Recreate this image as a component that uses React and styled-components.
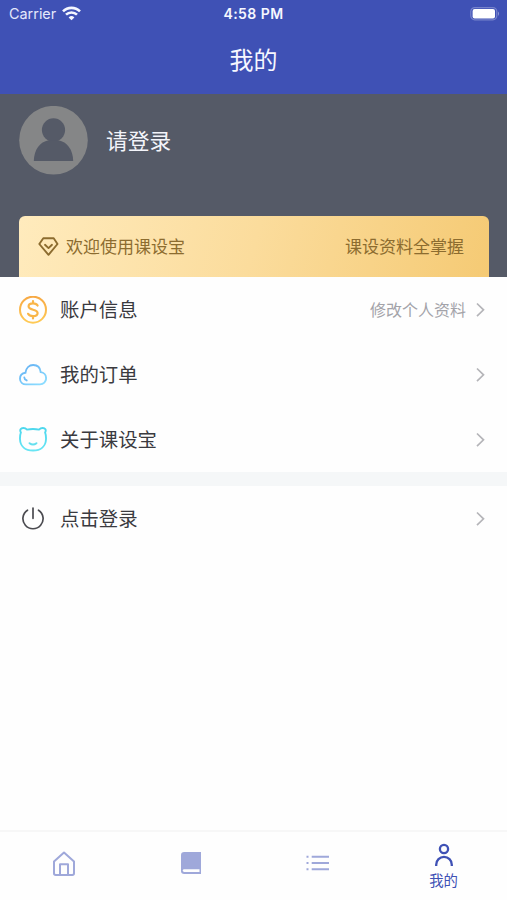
import React from "react";
import styled, { createGlobalStyle } from "styled-components";

const GlobalStyle = createGlobalStyle`
  * { box-sizing: border-box; }
  body {
    margin: 0;
    background: #fff;
    font-family: "Noto Sans CJK SC", sans-serif;
  }
  svg { display: block; flex: none; }
`;

const Screen = styled.div`
  display: flex;
  flex-direction: column;
  width: 507px;
  height: 900px;
  overflow: hidden;
  background: #fefefe;
`;

const Header = styled.header`
  height: 94px;
  flex: none;
  background: #3f51b5;
  color: #f6f7ff;
`;

const StatusBar = styled.div`
  display: grid;
  grid-template-columns: 1fr auto 1fr;
  align-items: center;
  height: 27px;
  padding: 0 7px 0 9px;
  font-family: Inter, sans-serif;
  font-size: 14px;
  line-height: 27px;
`;

const Carrier = styled.div`
  display: flex;
  align-items: center;
  gap: 6px;
  font-size: 14.4px;
  color: #e4e8fb;
`;

const Time = styled.div`
  margin-left: -2px;
  font-weight: 600;
  letter-spacing: 0.45px;
`;

const Battery = styled.div`
  display: flex;
  justify-content: flex-end;
`;

const Title = styled.h1`
  margin: 0;
  padding-top: 14px;
  text-align: center;
  font-size: 24px;
  font-weight: 400;
  line-height: 36px;
`;

const Profile = styled.section`
  display: flex;
  flex-direction: column;
  justify-content: space-between;
  flex: none;
  height: 183px;
  padding: 12px 18.5px 0 19px;
  background: #555a67;
`;

const User = styled.div`
  display: flex;
  align-items: center;
  gap: 18px;
  color: #f3f4fa;
  font-size: 21.7px;
  line-height: 32px;
`;

const UserName = styled.span`
  padding-bottom: 2px;
`;

const Banner = styled.div`
  display: flex;
  align-items: center;
  height: 61px;
  padding: 0 24.5px 0 19px;
  border-radius: 6px 6px 0 0;
  background: linear-gradient(105deg, #ffebbd 0%, #fbdc9c 50%, #f5ca74 100%);
  color: #8c6c2f;
  font-size: 17px;
  line-height: 26px;
`;

const BannerText = styled.span`
  margin-left: 7px;
  padding-bottom: 1px;
`;

const BannerNote = styled.span`
  margin-left: auto;
  padding-bottom: 1px;
`;

const Menu = styled.div`
  flex: none;
  background: #fefefe;
`;

const Row = styled.div`
  display: flex;
  align-items: center;
  height: 65px;
  padding: 0 22px 0 19px;
  color: #3a3a3f;
`;

const Label = styled.span`
  margin-left: 13px;
  padding-bottom: 1px;
  font-size: 19.4px;
  line-height: 30px;
`;

const Note = styled.span`
  margin: 0 10px 0 auto;
  padding-bottom: 1px;
  font-size: 16px;
  line-height: 24px;
  color: #a3a3a9;
`;

const Divider = styled.div`
  flex: none;
  height: 14px;
  background: #f5f7f8;
`;

const TabBar = styled.nav`
  display: grid;
  grid-template-columns: repeat(4, 1fr);
  height: 70px;
  margin-top: auto;
  border-top: 2px solid #f7f7f7;
`;

const Tab = styled.div`
  display: flex;
  flex-direction: column;
  align-items: center;
  gap: 1px;
  padding: ${(p) => (p.$active ? "11px 0 0" : "19px 0 0 1px")};
  color: ${(p) => (p.$active ? "#3f51b5" : "#9fa8da")};
  font-size: 14.4px;
  line-height: 22px;
`;

const WifiIcon = () => (
  <svg width="19" height="15" viewBox="0 0 19 15" fill="none" stroke="#f4f6ff" strokeWidth="2.6">
    <path d="M1 5.400a12 12 0 0 1 17 0M4 8.700a7.800 7.800 0 0 1 11 0" />
    <path d="M9.500 14.200 6.600 11.400a4.200 4.200 0 0 1 5.800 0Z" fill="#f4f6ff" stroke="none" />
  </svg>
);

const BatteryIcon = () => (
  <svg width="30" height="14" viewBox="0 0 30 14">
    <rect x="0.8" y="0.6" width="26" height="12.2" rx="4" fill="none" stroke="#7783cb" strokeWidth="1.2" />
    <rect x="2.6" y="2" width="22.4" height="9.400" rx="2" fill="#fff" />
    <path d="M28 4.500q2 2.200 0 4.400Z" fill="#8e98d5" />
  </svg>
);

const Avatar = () => (
  <svg width="69" height="69" viewBox="0 0 69 69">
    <circle cx="34.5" cy="34.2" r="34.3" fill="#858687" />
    <g fill="#555a67">
      <ellipse cx="34.5" cy="24" rx="11.6" ry="11.7" />
      <path d="M14.800 55C15 43.500 21 35.800 29.500 34.200h10C48 35.800 54 43.500 54.200 55Z" />
    </g>
  </svg>
);

const DiamondIcon = () => (
  <svg width="21" height="20" viewBox="0 0 21 20" fill="none" stroke="#8c6c2f" strokeWidth="1.9" strokeLinejoin="round" strokeLinecap="round">
    <path d="M5.3 1.300h10.400l3.800 5.700-9 10.800L1.300 7Z" />
    <path d="m7 7.800 3.500 3.300L14 7.800" />
  </svg>
);

const CoinIcon = () => (
  <svg width="28" height="28" viewBox="0 0 28 28" fill="none" strokeLinecap="round">
    <defs>
      <linearGradient id="coin" x1="0" y1="0" x2="0" y2="1">
        <stop stopColor="#f7a944" />
        <stop offset="1" stopColor="#ffca55" />
      </linearGradient>
    </defs>
    <circle cx="14" cy="13.7" r="13" stroke="url(#coin)" strokeWidth="2" />
    <path
      d="M18.600 9.500C17.800 8 16.200 7.300 14 7.300c-2.600 0-4.400 1.100-4.400 3 0 4.500 9 2.300 9 6.800 0 2-1.900 3.100-4.600 3.100-2.300 0-4.100-.8-4.900-2.400M14 5v2.300M14 20.200v2.300"
      stroke="#f9b548"
      strokeWidth="2.200"
    />
  </svg>
);

const CloudIcon = () => (
  <svg width="28" height="22" viewBox="0 0 28 22" fill="none" strokeWidth="1.9" strokeLinecap="round">
    <defs>
      <linearGradient id="cloud" x1="0" y1="0" x2="0.8" y2="1">
        <stop stopColor="#62aef2" />
        <stop offset="1" stopColor="#8bdcff" />
      </linearGradient>
    </defs>
    <path d="M7 20.400C3.600 20.400 1 18 1 14.700c0-3.200 2.200-5.500 5.500-6C7 4 10.200 1 14.200 1c4.100 0 7 2.600 7.500 7.100 3.200.3 5.400 3 5.400 6.200 0 3.500-2.700 6.100-6.100 6.100Z" stroke="url(#cloud)" />
    <path d="M5.300 13.500c.1 1.400 1 2.400 2.400 2.900" stroke="#6fbdf6" />
  </svg>
);

const BearIcon = () => (
  <svg width="28" height="25" viewBox="0 0 28 25" fill="none" strokeWidth="1.900" strokeLinecap="round" strokeLinejoin="round">
    <defs>
      <linearGradient id="bear" x1="0" y1="0" x2="0" y2="1">
        <stop stopColor="#4cd7ed" />
        <stop offset="1" stopColor="#68e5f4" />
      </linearGradient>
    </defs>
    <path d="M1.900 5.500C.4 3 1.800 1 4.300 1c1.500 0 2.700.5 3.700 1.600 3.800-.8 8.200-.8 12 0 1-1.100 2.200-1.600 3.700-1.600 2.500 0 3.900 2 2.400 4.500.8 2 1 4.300.9 6.700-.3 7-5.200 11.300-13 11.300S1.300 19.200 1 12.200c-.1-2.400.1-4.700.9-6.700Z" stroke="url(#bear)" />
    <path d="M10.500 16.200c2.200 1.700 4.800 1.700 7 0" stroke="#64dfee" />
  </svg>
);

const PowerIcon = () => (
  <svg width="28" height="24" viewBox="0 0 28 24" fill="none" stroke="#4b4b50" strokeWidth="1.700" strokeLinecap="round">
    <path d="M14 1v10.300M8.500 3.200a10.100 10.100 0 1 0 11 0" />
  </svg>
);

const ChevronIcon = styled(({ className }) => (
  <svg className={className} width="9" height="16" viewBox="0 0 9 16" fill="none" stroke="#b5b5b9" strokeWidth="1.700">
    <path d="m1 1.500 6.500 6.300L1 14.100" />
  </svg>
))`
  margin-left: ${(p) => (p.$pushed ? "auto" : "0")};
`;

const HomeIcon = () => (
  <svg width="24" height="26" viewBox="0 0 24 26" fill="none" stroke="currentColor" strokeWidth="2" strokeLinejoin="round">
    <path d="M2 10.500 12 1.500l10 9v11.800q0 1.700-1.700 1.700H3.700Q2 24 2 22.300Z" />
    <path d="M8 24V13.200h8V24" />
  </svg>
);

const BookIcon = () => (
  <svg width="20" height="24" viewBox="0 0 20 24">
    <path d="M3.200 1H20v22H3.200Q0 23 0 20V4Q0 1 3.200 1Z" fill="currentColor" />
    <path d="M3.200 18.200h15.300v2.800H3.200q-1.400 0-1.400-1.400t1.400-1.400Z" fill="#fefefe" />
  </svg>
);

const ListIcon = () => (
  <svg width="23" height="24" viewBox="0 0 23 24" fill="none" stroke="currentColor" strokeWidth="2">
    <path d="M.5 5.700h2M5.700 5.700H23M.5 12h2M5.700 12H23M.5 18.200h2M5.700 18.200H23" />
  </svg>
);

const PersonIcon = () => (
  <svg width="20" height="25" viewBox="0 0 20 25" fill="none" stroke="currentColor" strokeWidth="2.300">
    <circle cx="10" cy="6" r="4.100" />
    <path d="M2.200 23V21.700a7.800 7.800 0 0 1 15.600 0V23" />
  </svg>
);

const accountRows = [
  { Icon: CoinIcon, label: "账户信息", note: "修改个人资料" },
  { Icon: CloudIcon, label: "我的订单" },
  { Icon: BearIcon, label: "关于课设宝" },
];

function MenuRow({ Icon, label, note }) {
  return (
    <Row>
      <Icon />
      <Label>{label}</Label>
      {note && <Note>{note}</Note>}
      <ChevronIcon $pushed={!note} />
    </Row>
  );
}

export default function App() {
  return (
    <>
      <GlobalStyle />
      <Screen>
        <Header>
          <StatusBar>
            <Carrier>
              Carrier
              <WifiIcon />
            </Carrier>
            <Time>4:58 PM</Time>
            <Battery>
              <BatteryIcon />
            </Battery>
          </StatusBar>
          <Title>我的</Title>
        </Header>
        <Profile>
          <User>
            <Avatar />
            <UserName>请登录</UserName>
          </User>
          <Banner>
            <DiamondIcon />
            <BannerText>欢迎使用课设宝</BannerText>
            <BannerNote>课设资料全掌握</BannerNote>
          </Banner>
        </Profile>
        <Menu>
          {accountRows.map((row) => (
            <MenuRow key={row.label} {...row} />
          ))}
        </Menu>
        <Divider />
        <Menu>
          <MenuRow Icon={PowerIcon} label="点击登录" />
        </Menu>
        <TabBar>
          <Tab>
            <HomeIcon />
          </Tab>
          <Tab>
            <BookIcon />
          </Tab>
          <Tab>
            <ListIcon />
          </Tab>
          <Tab $active>
            <PersonIcon />
            我的
          </Tab>
        </TabBar>
      </Screen>
    </>
  );
}
